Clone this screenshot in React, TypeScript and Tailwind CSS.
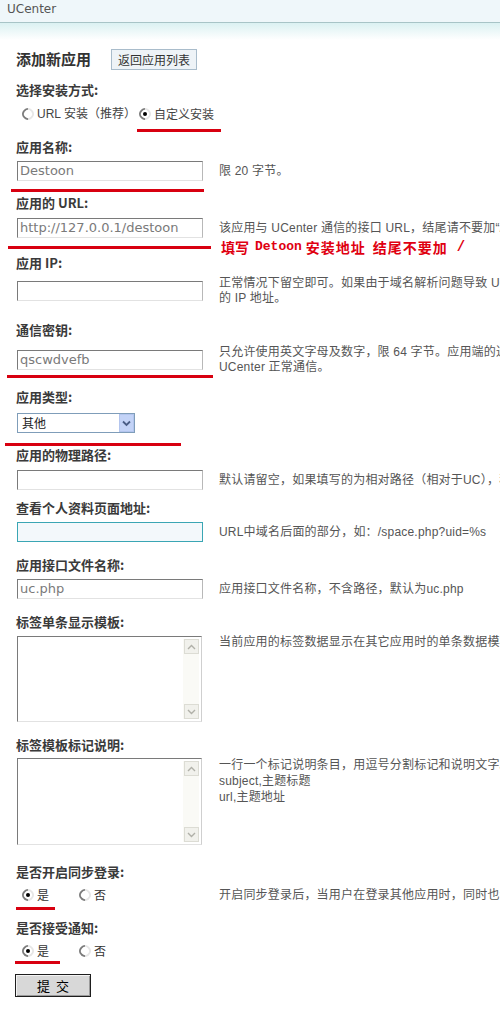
import React from 'react';

function Radio({ checked }: { checked?: boolean }) {
    return (
        <span className="relative inline-flex w-[12px] h-[12px] shrink-0 items-center justify-center">
            <span className="absolute inset-0 rounded-full border-[2px] border-t-[#7c7c7c] border-l-[#7c7c7c] border-r-[#e6e6e6] border-b-[#e6e6e6] -rotate-45 bg-white"></span>
            {checked && <span className="relative w-[4px] h-[4px] rounded-full bg-black"></span>}
        </span>
    );
}

function TextInput({ value, focus }: { value?: string; focus?: boolean }) {
    if (focus) {
        return <div className="w-[186px] h-[20px] border border-[#3aa6b4] bg-[#f3f8fb]"></div>;
    }
    return (
        <div className="w-[186px] h-[20px] border border-t-[#7a7a7a] border-l-[#7a7a7a] border-r-[#b8b8b8] border-b-[#e2e2e2] bg-white pl-[2px] text-[13px] leading-[18px] text-[#7a7a7a] font-['DejaVu_Sans',sans-serif] overflow-hidden">
            {value}
        </div>
    );
}

function Arrow({ up }: { up?: boolean }) {
    return (
        <div className="w-[15px] h-[15px] bg-[#f1f1ec] border border-[#dcdcd4] flex items-center justify-center">
            <svg width="9" height="6" viewBox="0 0 9 6">
                <path d={up ? 'M1 5 L4.5 1.5 L8 5' : 'M1 1 L4.5 4.5 L8 1'} stroke="#b0b0a8" strokeWidth="1.4" fill="none" />
            </svg>
        </div>
    );
}

function TextArea({ h }: { h: string }) {
    return (
        <div className={`w-[185px] ${h} border border-t-[#7a7a7a] border-l-[#7a7a7a] border-r-[#cfcfcf] border-b-[#e2e2e2] bg-white flex justify-end p-[2px]`}>
            <div className="w-[16px] h-full bg-[#fafaf6] flex flex-col justify-between items-center">
                <Arrow up />
                <Arrow />
            </div>
        </div>
    );
}

function Label({ text, mt }: { text: string; mt: string }) {
    return <div className={`${mt} h-[16px] leading-[16px] text-[13px] font-bold text-[#3a3a3a]`}>{text}</div>;
}

export default function App() {
    const desc = "pl-[1px] text-[12px] text-[#555] tracking-[0.2px] font-['Liberation_Sans','Noto_Sans_CJK_SC',sans-serif] whitespace-nowrap";
    const left = 'w-[202px] shrink-0 pl-[1px]';
    return (
        <div className="relative w-[500px] h-[1020px] overflow-hidden bg-white font-['Noto_Sans_CJK_SC',sans-serif] text-[#333]">
            {/* top bar */}
            <div className="h-[22px] bg-[#eff7fa] pl-[7px] text-[12px] leading-[18px] text-[#555] font-['DejaVu_Sans',sans-serif]">UCenter</div>
            <div className="h-px bg-[#a8c4c7]"></div>
            <div className="h-[17px] bg-gradient-to-b from-[#dbf1f2] to-white"></div>

            <div className="pl-[16px]">
                <div className="mt-[8px] h-[22px] flex items-center">
                    <h2 className="text-[15px] font-bold text-[#333] w-[95px]">添加新应用</h2>
                    <button className="h-[21px] px-[6px] border border-[#a9bccb] bg-[#eef3f7] text-[12px] text-[#333] leading-[19px]">返回应用列表</button>
                </div>

                <Label text="选择安装方式:" mt="mt-[12px]" />
                <div className="mt-[8px] h-[16px] flex items-center pl-[6px] text-[12px] text-[#444]">
                    <Radio />
                    <span className="ml-[3px] font-['Liberation_Sans','Noto_Sans_CJK_SC',sans-serif]">URL 安装（推荐）</span>
                    <span className="ml-[3px] flex"><Radio checked /></span>
                    <span className="ml-[3px]">自定义安装</span>
                </div>

                <Label text="应用名称:" mt="mt-[17px]" />
                <div className="mt-[6px] h-[20px] flex items-center">
                    <div className={left}><TextInput value="Destoon" /></div>
                    <div className={desc}>限 20 字节。</div>
                </div>

                <Label text="应用的 URL:" mt="mt-[14px]" />
                <div className="mt-[7px] h-[20px] flex items-center">
                    <div className={left}><TextInput value="http://127.0.0.1/destoon" /></div>
                    <div className={desc}>该应用与 UCenter 通信的接口 URL，结尾请不要加“/”，应用的通知只发送给第一个地址</div>
                </div>

                <Label text="应用 IP:" mt="mt-[17px]" />
                <div className="mt-[5px] h-[30px] flex items-center">
                    <div className={left}><TextInput /></div>
                    <div className={`${desc} leading-[15px]`}>
                        <div>正常情况下留空即可。如果由于域名解析问题导致 UCenter 与该应用通信失败，请尝试设置为该应用所在服务器</div>
                        <div>的 IP 地址。</div>
                    </div>
                </div>

                <Label text="通信密钥:" mt="mt-[16px]" />
                <div className="mt-[7px] h-[30px] flex items-center">
                    <div className={left}><TextInput value="qscwdvefb" /></div>
                    <div className={`${desc} leading-[15px]`}>
                        <div>只允许使用英文字母及数字，限 64 字节。应用端的通信密钥必须与此设置保持一致，否则该应用将无法与</div>
                        <div>UCenter 正常通信。</div>
                    </div>
                </div>

                <Label text="应用类型:" mt="mt-[14px]" />
                <div className="mt-[8px] h-[20px] flex items-center pl-[1px]">
                    <div className="w-[118px] h-[20px] border border-[#7f9db9] bg-white flex items-center justify-between">
                        <span className="pl-[4px] text-[12px] text-[#222]">其他</span>
                        <span className="w-[15px] h-[18px] bg-[#c3d3f7] border border-[#b3c5ee] flex items-center justify-center">
                            <svg width="9" height="7" viewBox="0 0 9 7">
                                <path d="M1 1.5 L4.5 5 L8 1.5" stroke="#4a5d86" strokeWidth="1.8" fill="none" />
                            </svg>
                        </span>
                    </div>
                </div>

                <Label text="应用的物理路径:" mt="mt-[14px]" />
                <div className="mt-[7px] h-[20px] flex items-center">
                    <div className={left}><TextInput /></div>
                    <div className={desc}>默认请留空，如果填写的为相对路径（相对于UC），程序会自动转换为绝对路径</div>
                </div>

                <Label text="查看个人资料页面地址:" mt="mt-[10px]" />
                <div className="mt-[6px] h-[20px] flex items-center">
                    <div className={left}><TextInput focus /></div>
                    <div className={desc}>URL中域名后面的部分，如：/space.php?uid=%s</div>
                </div>

                <Label text="应用接口文件名称:" mt="mt-[15px]" />
                <div className="mt-[6px] h-[20px] flex items-center">
                    <div className={left}><TextInput value="uc.php" /></div>
                    <div className={desc}>应用接口文件名称，不含路径，默认为uc.php</div>
                </div>

                <Label text="标签单条显示模板:" mt="mt-[15px]" />
                <div className="mt-[6px] flex items-start">
                    <div className={left}><TextArea h="h-[86px]" /></div>
                    <div className={`${desc} leading-[16px] -mt-[2px]`}>当前应用的标签数据显示在其它应用时的单条数据模板。</div>
                </div>

                <Label text="标签模板标记说明:" mt="mt-[15px]" />
                <div className="mt-[5px] flex items-start">
                    <div className={left}><TextArea h="h-[87px]" /></div>
                    <div className={`${desc} leading-[16px] -mt-[1px]`}>
                        <div>一行一个标记说明条目，用逗号分割标记和说明文字。</div>
                        <div>subject,主题标题</div>
                        <div>url,主题地址</div>
                    </div>
                </div>

                <Label text="是否开启同步登录:" mt="mt-[19px]" />
                <div className="mt-[7px] h-[16px] flex items-center">
                    <div className="w-[202px] shrink-0 flex items-center pl-[6px] text-[12px] text-[#333]">
                        <Radio checked />
                        <span className="ml-[3px] w-[42px]">是</span>
                        <Radio />
                        <span className="ml-[3px]">否</span>
                    </div>
                    <div className={desc}>开启同步登录后，当用户在登录其他应用时，同时也会登录该应用。</div>
                </div>

                <Label text="是否接受通知:" mt="mt-[17px]" />
                <div className="mt-[7px] h-[16px] flex items-center pl-[6px] text-[12px] text-[#333]">
                    <Radio checked />
                    <span className="ml-[3px] w-[42px]">是</span>
                    <Radio />
                    <span className="ml-[3px]">否</span>
                </div>

                <button className="mt-[15px] -ml-[1px] w-[76px] h-[23px] border border-[#1e1e1e] bg-[#d8d8d8] shadow-[inset_1px_1px_0_#f4f4f4,inset_-1px_-1px_0_#9a9a9a] text-[13px] text-black leading-[20px]">
                    提&nbsp;&nbsp;交
                </button>
            </div>

            {/* red annotations */}
            <div className="absolute left-[137px] top-[129px] w-[84px] h-[3px] bg-[#d80010]"></div>
            <div className="absolute left-[11px] top-[189px] w-[193px] h-[3px] bg-[#d80010]"></div>
            <div className="absolute left-[8px] top-[246px] w-[203px] h-[3px] bg-[#d80010]"></div>
            <div className="absolute left-[221px] top-[238px] h-[18px] flex items-center text-[14px] font-bold text-[#e00010] whitespace-nowrap">
                <span>填写</span>
                <span className="ml-[6px] font-['Liberation_Mono',monospace] text-[13px]">Detoon</span>
                <span className="ml-[4px] tracking-[1px]">安装地址</span>
                <span className="ml-[7px] tracking-[1px]">结尾不要加</span>
                <span className="ml-[9px] font-['Liberation_Mono',monospace]">/</span>
            </div>
            <div className="absolute left-[7px] top-[375px] w-[206px] h-[3px] bg-[#d80010]"></div>
            <div className="absolute left-[5px] top-[443px] w-[176px] h-[3px] bg-[#d80010]"></div>
            <div className="absolute left-[16px] top-[907px] w-[39px] h-[3px] bg-[#d80010]"></div>
            <div className="absolute left-[15px] top-[961px] w-[45px] h-[3px] bg-[#d80010]"></div>
        </div>
    );
}
